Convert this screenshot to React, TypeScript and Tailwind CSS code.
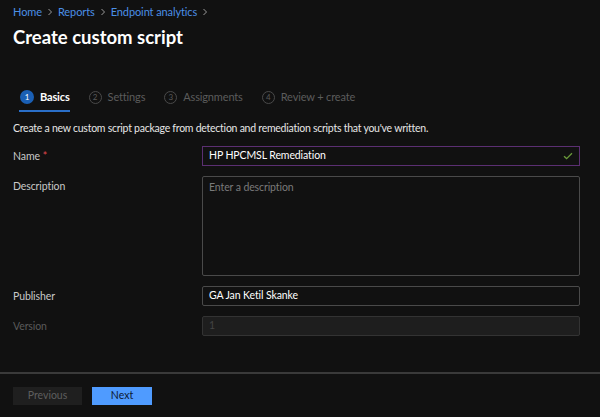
import React from "react";

const font = { fontFamily: 'Lato, "Segoe UI", "Open Sans", sans-serif' };

function Chevron() {
  return (
    <svg width="8" height="8" viewBox="0 0 8 8" className="mx-[4px]">
      <path d="M2.5 1 L5.5 4 L2.5 7" fill="none" stroke="#9a9a9a" strokeWidth="1" />
    </svg>
  );
}

function Step({ n, label, active }: { n: number; label: string; active?: boolean }) {
  return (
    <div className="relative flex items-center gap-[6px] h-[24px]">
      <div
        className={
          active
            ? "w-[14px] h-[14px] rounded-full bg-[#1a5fb4] text-white text-[8px] flex items-center justify-center"
            : "w-[13px] h-[13px] rounded-full border border-[#4a4a4a] text-[#5a5a5a] text-[8px] flex items-center justify-center"
        }
      >
        {n}
      </div>
      <span className={active ? "text-[11px] font-bold text-white tracking-[-0.15px]" : "text-[11px] text-[#5c5c5c] tracking-[-0.15px]"}>
        {label}
      </span>
      {active && <div className="absolute left-[-1px] right-0 bottom-[-3px] h-[2px] bg-[#2a6fc9]" />}
    </div>
  );
}

function Row({ label, children, labelClass = "text-[#c8c8c8]", req }: { label: string; children: React.ReactNode; labelClass?: string; req?: boolean }) {
  return (
    <div className="flex items-start">
      <div className={`w-[189px] text-[10.5px] pt-[3px] tracking-[-0.1px] ${labelClass}`}>
        {label}
        {req && <span className="text-[#e0484e] ml-[3px]">*</span>}
      </div>
      <div className="w-[378px]">{children}</div>
    </div>
  );
}

export default function App() {
  return (
    <div className="w-[600px] h-[417px] bg-[#111111] flex flex-col overflow-hidden" style={font}>
      <div className="px-[13px] flex-1">
        <div className="flex items-center text-[11px] text-[#4b8fe6] pt-[4px] h-[20px] tracking-[-0.1px]">
          <span>Home</span>
          <Chevron />
          <span>Reports</span>
          <Chevron />
          <span>Endpoint analytics</span>
          <Chevron />
        </div>
        <h1 className="text-[18.5px] font-bold text-white leading-[26px] mt-[4px]">Create custom script</h1>

        <div className="flex items-center gap-[19px] mt-[35px] pl-[7px]">
          <Step n={1} label="Basics" active />
          <Step n={2} label="Settings" />
          <Step n={3} label="Assignments" />
          <Step n={4} label="Review + create" />
        </div>

        <p className="text-[10.5px] text-[#e6e6e6] mt-[12px] leading-[14px] tracking-[-0.25px]">
          Create a new custom script package from detection and remediation scripts that you've written.
        </p>

        <div className="flex flex-col gap-[10px] mt-[11px]">
          <Row label="Name" req>
            <div className="h-[20px] border border-[#5b2f72] bg-[#111111] flex items-center px-[6px] text-[10.5px] text-white tracking-[-0.1px]">
              <span className="flex-1">HP HPCMSL Remediation</span>
              <svg width="10" height="8" viewBox="0 0 10 8">
                <path d="M1 4.2 L3.6 6.6 L9 1.2" fill="none" stroke="#6a9a3a" strokeWidth="1.3" />
              </svg>
            </div>
          </Row>
          <Row label="Description">
            <div className="h-[100px] border border-[#4a4a4a] rounded-[2px] bg-[#111111] px-[6px] pt-[3px] text-[10.5px] text-[#7a7a7a] tracking-[-0.1px]">
              Enter a description
            </div>
          </Row>
          <Row label="Publisher">
            <div className="h-[20px] border border-[#4a4a4a] rounded-[2px] bg-[#111111] flex items-center px-[6px] text-[10.5px] text-white tracking-[-0.1px]">
              GA Jan Ketil Skanke
            </div>
          </Row>
          <Row label="Version" labelClass="text-[#5a5a5a]">
            <div className="h-[20px] border border-[#333333] rounded-[2px] bg-[#1e1e1e] flex items-center px-[6px] text-[10.5px] text-[#444444]">
              1
            </div>
          </Row>
        </div>
      </div>

      <div className="h-[2px] bg-[#3a3a3a] mb-[13px]" />
      <div className="flex gap-[10px] px-[13px] pb-[12px]">
        <button className="w-[69px] h-[18px] bg-[#1f1f1f] text-[#5e5e5e] text-[10.5px]">Previous</button>
        <button className="w-[60px] h-[18px] bg-[#4f9bff] text-[#0d1a33] text-[10.5px]">Next</button>
      </div>
    </div>
  );
}
